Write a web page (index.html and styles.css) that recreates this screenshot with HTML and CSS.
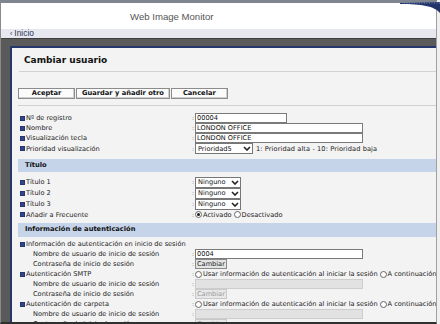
FILE: index.html
```html
<!DOCTYPE html>
<html lang="es">
<head>
    <meta charset="UTF-8">
    <meta name="viewport" content="width=device-width, initial-scale=1.0">
    <title>Web Image Monitor - Cambiar usuario</title>
    <link rel="stylesheet" href="styles.css">
</head>
<body>
    <div class="window">
        <header class="masthead">
            <span class="product">Web Image Monitor</span>
        </header>
        <nav class="crumb"><span class="crumb-arrow">‹</span>Inicio</nav>

        <main class="backdrop">
            <section class="dialog">
                <h1 class="dialog-title">Cambiar usuario</h1>

                <div class="actions">
                    <button class="btn">Aceptar</button>
                    <button class="btn">Guardar y añadir otro</button>
                    <button class="btn">Cancelar</button>
                </div>

                <div class="form">
                    <div class="row">
                        <span class="label">Nº de registro</span><span class="colon">:</span>
                        <span class="field"><input class="text w-short" value="00004"></span>
                    </div>
                    <div class="row">
                        <span class="label">Nombre</span><span class="colon">:</span>
                        <span class="field"><input class="text w-long" value="LONDON OFFICE"></span>
                    </div>
                    <div class="row">
                        <span class="label">Visualización tecla</span><span class="colon">:</span>
                        <span class="field"><input class="text w-long" value="LONDON OFFICE"></span>
                    </div>
                    <div class="row tall">
                        <span class="label">Prioridad visualización</span><span class="colon">:</span>
                        <span class="field">
                            <span class="select w-prio">Prioridad5<svg class="chev" viewBox="0 0 8 5" width="8" height="5"><path d="M1 1 L4 4 L7 1" fill="none" stroke="#222" stroke-width="1.6"/></svg></span>
                            <span class="hint">1: Prioridad alta - 10: Prioridad baja</span>
                        </span>
                    </div>

                    <div class="section first">Título</div>

                    <div class="row tall">
                        <span class="label">Título 1</span><span class="colon">:</span>
                        <span class="field"><span class="select w-none">Ninguno<svg class="chev" viewBox="0 0 8 5" width="8" height="5"><path d="M1 1 L4 4 L7 1" fill="none" stroke="#222" stroke-width="1.6"/></svg></span></span>
                    </div>
                    <div class="row tall">
                        <span class="label">Título 2</span><span class="colon">:</span>
                        <span class="field"><span class="select w-none">Ninguno<svg class="chev" viewBox="0 0 8 5" width="8" height="5"><path d="M1 1 L4 4 L7 1" fill="none" stroke="#222" stroke-width="1.6"/></svg></span></span>
                    </div>
                    <div class="row tall">
                        <span class="label">Título 3</span><span class="colon">:</span>
                        <span class="field"><span class="select w-none">Ninguno<svg class="chev" viewBox="0 0 8 5" width="8" height="5"><path d="M1 1 L4 4 L7 1" fill="none" stroke="#222" stroke-width="1.6"/></svg></span></span>
                    </div>
                    <div class="row">
                        <span class="label">Añadir a Frecuente</span><span class="colon">:</span>
                        <span class="field">
                            <span class="option"><span class="radio on"></span>Activado</span>
                            <span class="option"><span class="radio"></span>Desactivado</span>
                        </span>
                    </div>

                    <div class="section">Información de autenticación</div>

                    <div class="row">
                        <span class="label wide">Información de autenticación en inicio de sesión</span>
                    </div>
                    <div class="row">
                        <span class="label sub">Nombre de usuario de inicio de sesión</span><span class="colon">:</span>
                        <span class="field"><input class="text w-long" value="0004"></span>
                    </div>
                    <div class="row">
                        <span class="label sub">Contraseña de inicio de sesión</span><span class="colon">:</span>
                        <span class="field"><button class="small-btn">Cambiar</button></span>
                    </div>
                    <div class="row">
                        <span class="label">Autenticación SMTP</span><span class="colon">:</span>
                        <span class="field">
                            <span class="option"><span class="radio"></span>Usar información de autenticación al iniciar la sesión</span>
                            <span class="option"><span class="radio"></span>A continuación</span>
                        </span>
                    </div>
                    <div class="row">
                        <span class="label sub">Nombre de usuario de inicio de sesión</span><span class="colon">:</span>
                        <span class="field"><input class="text w-long" disabled></span>
                    </div>
                    <div class="row">
                        <span class="label sub">Contraseña de inicio de sesión</span><span class="colon">:</span>
                        <span class="field"><button class="small-btn" disabled>Cambiar</button></span>
                    </div>
                    <div class="row">
                        <span class="label">Autenticación de carpeta</span><span class="colon">:</span>
                        <span class="field">
                            <span class="option"><span class="radio"></span>Usar información de autenticación al iniciar la sesión</span>
                            <span class="option"><span class="radio"></span>A continuación</span>
                        </span>
                    </div>
                    <div class="row">
                        <span class="label sub">Nombre de usuario de inicio de sesión</span><span class="colon">:</span>
                        <span class="field"><input class="text w-long" disabled></span>
                    </div>
                    <div class="row">
                        <span class="label sub">Contraseña de inicio de sesión</span><span class="colon">:</span>
                        <span class="field"><button class="small-btn" disabled>Cambiar</button></span>
                    </div>
                </div>
            </section>
        </main>
    </div>

    <svg class="swoosh" viewBox="0 0 40 14" width="40" height="14">
        <path d="M0 3 L40 2 L40 13 C34 6 22 4 0 4 Z" fill="#22346a"/>
        <path d="M4 3 H40" stroke="#8fa0c8" stroke-width="0.8" stroke-dasharray="1 1.5"/>
    </svg>
</body>
</html>
```

FILE: styles.css
```css
html, body {
    margin: 0;
    padding: 0;
}

body {
    position: relative;
    width: 440px;
    height: 324px;
    background-color: #efefef;
    font-family: "DejaVu Sans", Verdana, sans-serif;
    overflow: hidden;
}

.window {
    display: flex;
    flex-direction: column;
    width: 437px;
    height: 324px;
    box-sizing: border-box;
    border-top: 3px solid #80868f;
    border-left: 1px solid #8a8a8a;
    border-right: 1px solid #a0a0a0;
    border-bottom: 2px solid #2f2f2f;
    background-color: #fff;
    overflow: hidden;
}

.masthead {
    height: 26px;
    flex-shrink: 0;
    display: flex;
    align-items: center;
    padding-left: 129px;
    font-family: "Liberation Sans", Arial, sans-serif;
    font-size: 9.6px;
    color: #555;
}

.swoosh {
    position: absolute;
    top: 0;
    right: 0;
}

.crumb {
    height: 9px;
    flex-shrink: 0;
    background-color: #e6e7ef;
    padding-left: 9px;
    font-family: "Liberation Sans", Arial, sans-serif;
    font-size: 8.4px;
    line-height: 9px;
    color: #2f3655;
}

.crumb-arrow {
    font-size: 7px;
    margin-right: 2px;
}

.backdrop {
    flex: 1;
    min-height: 0;
    background-color: #5a5a5a;
    border-top: 1px solid #3f3f3f;
    padding: 7px 0 0 9px;
}

.dialog {
    width: 440px;
    height: 100%;
    box-sizing: border-box;
    border-top: 2px solid #24366c;
    border-left: 2px solid #24366c;
    background-color: #f3f3f3;
    padding-left: 7px;
}

.dialog-title {
    margin: 0;
    padding: 5px 0 4px 5px;
    line-height: 14px;
    font-size: 9px;
    font-weight: bold;
    color: #111;
    border-bottom: 1px solid #d2d2d2;
}

.actions {
    display: flex;
    padding: 16px 0 6px 0;
    margin-left: -1px;
    border-bottom: 1px solid #d2d2d2;
}

.btn {
    height: 11px;
    min-width: 57px;
    padding: 0 5px;
    margin: 0 1px 0 0;
    border: 1px solid #8c8c8c;
    box-shadow: inset -1px -1px 0 #cfcfcf;
    background-color: #fbfbfb;
    font-family: "DejaVu Sans", Verdana, sans-serif;
    font-size: 6.7px;
    font-weight: bold;
    line-height: 9px;
    color: #111;
}

.form {
    padding-top: 7px;
}

.row {
    display: grid;
    grid-template-columns: 173px 3px 1fr;
    align-items: center;
    height: 10px;
    font-size: 6.6px;
    color: #222;
    white-space: nowrap;
}

.row.tall {
    height: 11px;
}

.label {
    display: flex;
    align-items: center;
    padding-left: 1px;
}

.label::before {
    content: "";
    width: 5px;
    height: 5px;
    margin-right: 1px;
    background-color: #33458a;
    box-shadow: inset 0 0 0 1px #24356f;
}

.label.sub {
    padding-left: 14px;
}

.label.sub::before {
    display: none;
}

.label.wide {
    grid-column: 1 / -1;
}

.colon {
    color: #777;
    font-size: 6px;
    line-height: 10px;
}

.field {
    display: flex;
    align-items: center;
    height: 100%;
}

.text {
    height: 10px;
    box-sizing: border-box;
    margin: 0;
    padding: 0 1px;
    border: 1px solid #7a7a7a;
    background-color: #fff;
    font-family: "DejaVu Sans", Verdana, sans-serif;
    font-size: 6.6px;
    color: #111;
}

.text:disabled {
    background-color: #e2e2e2;
    border-color: #cdcdcd;
}

.w-short {
    width: 92px;
}

.w-long {
    width: 168px;
}

.select {
    display: inline-flex;
    align-items: center;
    justify-content: space-between;
    height: 11px;
    box-sizing: border-box;
    padding: 0 1px 0 2px;
    border: 1px solid #777;
    background-color: #fff;
    color: #111;
}

.w-prio {
    width: 58px;
}

.w-none {
    width: 46px;
}

.hint {
    margin-left: 3px;
    letter-spacing: 0.1px;
}

.option {
    display: inline-flex;
    align-items: center;
    margin-right: 2px;
}

.radio {
    display: inline-flex;
    align-items: center;
    justify-content: center;
    width: 7px;
    height: 7px;
    box-sizing: border-box;
    margin: 0 1px 0 0;
    border: 1px solid #666;
    border-radius: 50%;
    background-color: #fff;
}

.radio.on::after {
    content: "";
    width: 3px;
    height: 3px;
    border-radius: 50%;
    background-color: #1a1a1a;
}

.small-btn {
    height: 10px;
    margin: 0;
    padding: 0 1px;
    border: 1px solid #8a8a8a;
    background-color: #e4e4e4;
    font-family: "DejaVu Sans", Verdana, sans-serif;
    font-size: 6.6px;
    line-height: 8px;
    color: #222;
}

.small-btn:disabled {
    border-color: #c9c9c9;
    background-color: #e8e8e8;
    color: #9a9a9a;
}

.section {
    height: 13.5px;
    margin: 3.5px 0 2.8px -1px;
    padding-left: 7px;
    background-color: #c5d4e9;
    font-size: 6.7px;
    font-weight: bold;
    line-height: 13.5px;
    color: #111;
}

.section.first {
    margin: 4.5px 0 4.5px -1px;
}
```
